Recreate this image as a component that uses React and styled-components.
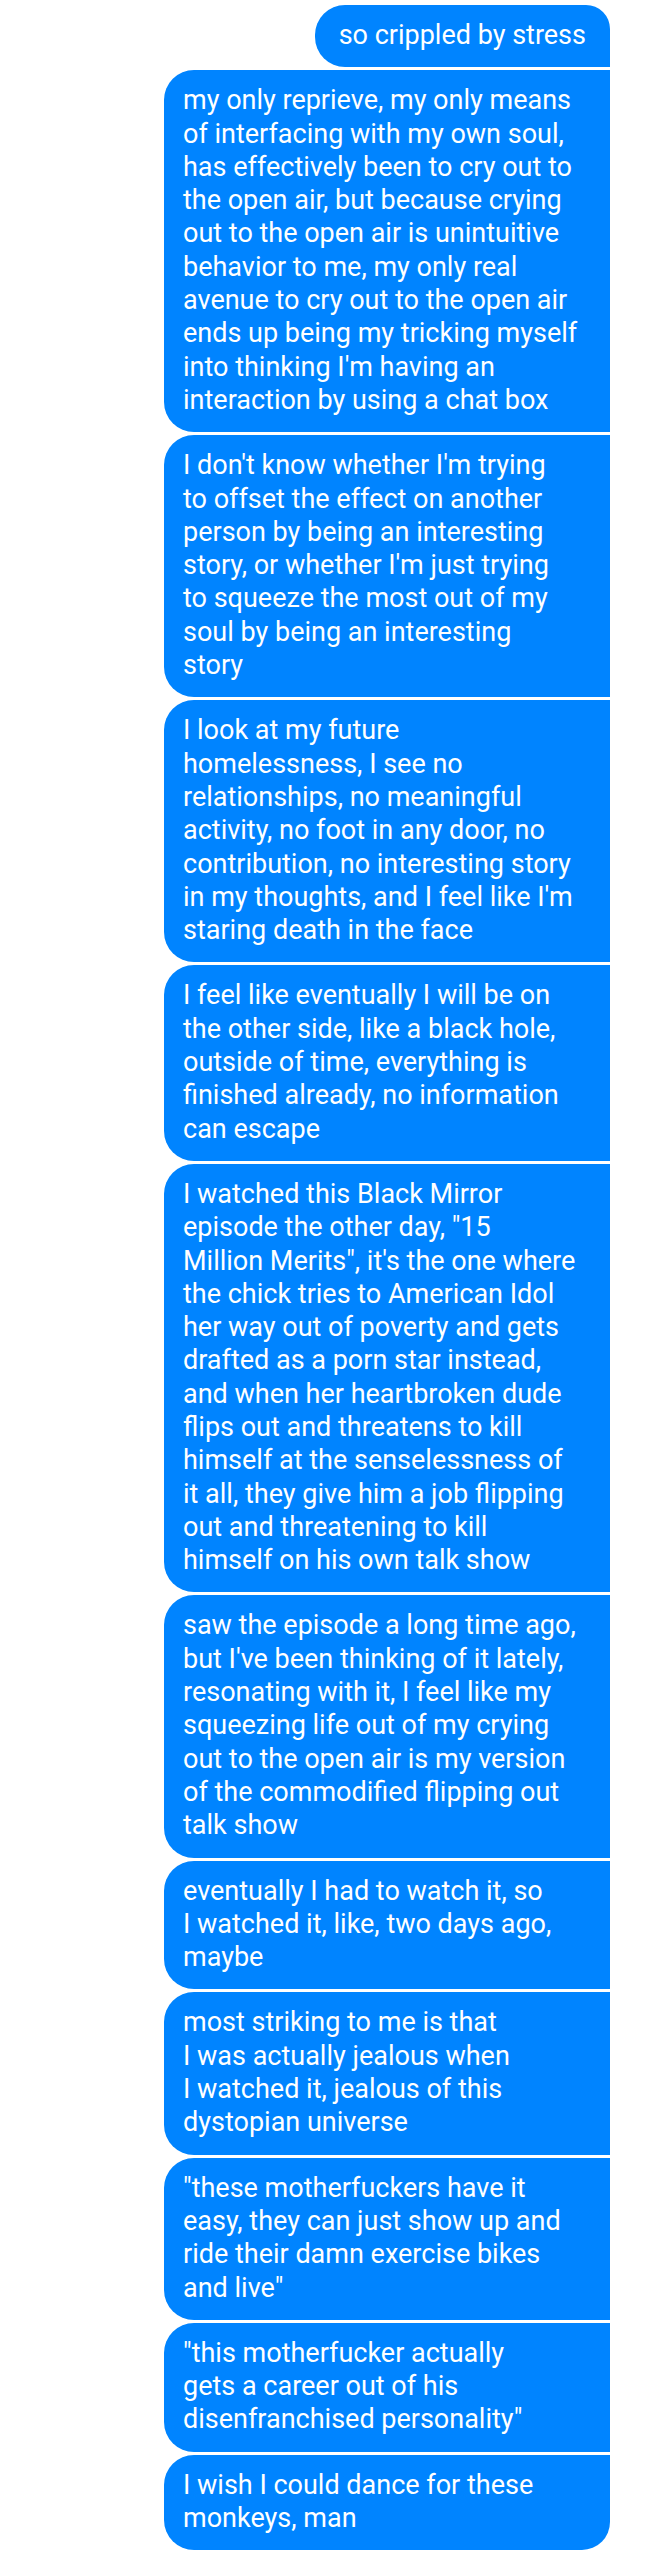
import React from 'react'
import styled, { createGlobalStyle } from 'styled-components'

const messages = [
  ['so crippled by stress'],
  [
    'my only reprieve, my only means',
    'of interfacing with my own soul,',
    'has effectively been to cry out to',
    'the open air, but because crying',
    'out to the open air is unintuitive',
    'behavior to me, my only real',
    'avenue to cry out to the open air',
    'ends up being my tricking myself',
    "into thinking I'm having an",
    'interaction by using a chat box',
  ],
  [
    "I don't know whether I'm trying",
    'to offset the effect on another',
    'person by being an interesting',
    "story, or whether I'm just trying",
    'to squeeze the most out of my',
    'soul by being an interesting',
    'story',
  ],
  [
    'I look at my future',
    'homelessness, I see no',
    'relationships, no meaningful',
    'activity, no foot in any door, no',
    'contribution, no interesting story',
    "in my thoughts, and I feel like I'm",
    'staring death in the face',
  ],
  [
    'I feel like eventually I will be on',
    'the other side, like a black hole,',
    'outside of time, everything is',
    'finished already, no information',
    'can escape',
  ],
  [
    'I watched this Black Mirror',
    'episode the other day, "15',
    'Million Merits", it\'s the one where',
    'the chick tries to American Idol',
    'her way out of poverty and gets',
    'drafted as a porn star instead,',
    'and when her heartbroken dude',
    'flips out and threatens to kill',
    'himself at the senselessness of',
    'it all, they give him a job flipping',
    'out and threatening to kill',
    'himself on his own talk show',
  ],
  [
    'saw the episode a long time ago,',
    "but I've been thinking of it lately,",
    'resonating with it, I feel like my',
    'squeezing life out of my crying',
    'out to the open air is my version',
    'of the commodified flipping out',
    'talk show',
  ],
  [
    'eventually I had to watch it, so',
    'I watched it, like, two days ago,',
    'maybe',
  ],
  [
    'most striking to me is that',
    'I was actually jealous when',
    'I watched it, jealous of this',
    'dystopian universe',
  ],
  [
    '"these motherfuckers have it',
    'easy, they can just show up and',
    'ride their damn exercise bikes',
    'and live"',
  ],
  [
    '"this motherfucker actually',
    'gets a career out of his',
    'disenfranchised personality"',
  ],
  ['I wish I could dance for these', 'monkeys, man'],
]

const App = () => {
  const last = messages.length - 1
  return (
    <>
      <GlobalStyle />
      <Thread>
        {messages.map((lines, i) => (
          <Bubble key={i} $wide={lines.length > 1} $first={i === 0} $last={i === last}>
            {lines.map((line, j) => (
              <Line key={j}>{line}</Line>
            ))}
          </Bubble>
        ))}
      </Thread>
    </>
  )
}

const GlobalStyle = createGlobalStyle`
  body {
    margin: 0;
    background: #ffffff;
    font-family: Roboto, "Liberation Sans", sans-serif;
  }
`

const Thread = styled.div`
  display: flex;
  flex-direction: column;
  align-items: flex-end;
  gap: 3px;
  padding: 5px 38px 9px 0;
`

// a lone short message gets a bit more side padding, like the app does
const Bubble = styled.div`
  box-sizing: border-box;
  width: ${p => (p.$wide ? '446px' : 'auto')};
  padding: 14px ${p => (p.$wide ? '19px' : '24px')} 15px;
  background: #0084ff;
  color: #ffffff;
  font-size: 27px;
  line-height: 33.3px;
  border-radius: 30px ${p => (p.$first ? '24px' : '0')} ${p => (p.$last ? '28px' : '0')} 30px;
`

const Line = styled.span`
  display: block;
  white-space: nowrap;
`

export default App
